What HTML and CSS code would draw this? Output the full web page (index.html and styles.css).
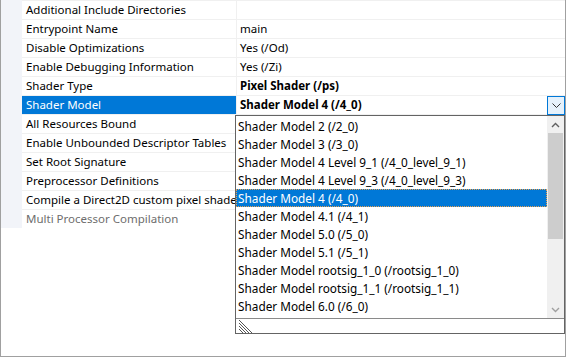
FILE: index.html
```html
<!DOCTYPE html>
<html lang="en">
<head>
  <meta charset="UTF-8" />
  <title>Shader Model</title>
  <link rel="stylesheet" href="styles.css">
</head>
<body>
<div class="frame">
  <div class="grid">
    <div class="row"><div class="name">Additional Include Directories</div><div class="value"></div></div>
    <div class="row"><div class="name">Entrypoint Name</div><div class="value">main</div></div>
    <div class="row"><div class="name">Disable Optimizations</div><div class="value">Yes (/Od)</div></div>
    <div class="row"><div class="name">Enable Debugging Information</div><div class="value">Yes (/Zi)</div></div>
    <div class="row"><div class="name">Shader Type</div><div class="value bold">Pixel Shader (/ps)</div></div>
    <div class="row selected">
      <div class="name">Shader Model</div>
      <div class="value bold">
        <span class="value-text">Shader Model 4 (/4_0)</span>
        <span class="drop-button">
          <svg width="9" height="5" viewBox="0 0 9 5"><path d="M0.5 0.5 L4.5 4.5 L8.5 0.5" fill="none" stroke="#333" stroke-width="1"/></svg>
        </span>
      </div>
    </div>
    <div class="row"><div class="name">All Resources Bound</div><div class="value"></div></div>
    <div class="row"><div class="name">Enable Unbounded Descriptor Tables</div><div class="value"></div></div>
    <div class="row"><div class="name">Set Root Signature</div><div class="value"></div></div>
    <div class="row"><div class="name">Preprocessor Definitions</div><div class="value"></div></div>
    <div class="row"><div class="name long">Compile a Direct2D custom pixel shader</div><div class="value"></div></div>
    <div class="row"><div class="name muted">Multi Processor Compilation</div><div class="value"></div></div>
  </div>

  <div class="dropdown">
    <div class="list-area">
      <ul class="items">
        <li>Shader Model 2 (/2_0)</li>
        <li>Shader Model 3 (/3_0)</li>
        <li>Shader Model 4 Level 9_1 (/4_0_level_9_1)</li>
        <li>Shader Model 4 Level 9_3 (/4_0_level_9_3)</li>
        <li class="current">Shader Model 4 (/4_0)</li>
        <li>Shader Model 4.1 (/4_1)</li>
        <li>Shader Model 5.0 (/5_0)</li>
        <li>Shader Model 5.1 (/5_1)</li>
        <li>Shader Model rootsig_1_0 (/rootsig_1_0)</li>
        <li>Shader Model rootsig_1_1 (/rootsig_1_1)</li>
        <li>Shader Model 6.0 (/6_0)</li>
      </ul>
      <div class="scrollbar">
        <div class="arrow">
          <svg width="9" height="6" viewBox="0 0 9 6"><path d="M1 5 L4.5 1.5 L8 5" fill="none" stroke="#606060" stroke-width="1.4"/></svg>
        </div>
        <div class="track"><div class="thumb"></div></div>
        <div class="arrow">
          <svg width="9" height="6" viewBox="0 0 9 6"><path d="M1 1 L4.5 4.5 L8 1" fill="none" stroke="#a0a0a0" stroke-width="1.4"/></svg>
        </div>
      </div>
    </div>
    <div class="grip-bar">
      <svg width="16" height="14" viewBox="0 0 16 14">
        <path d="M1 1 L14 14 M1 4 L11 14 M1 7 L8 14 M1 10 L5 14" stroke="#555" stroke-width="1" fill="none"/>
      </svg>
    </div>
  </div>
</div>
</body>
</html>
```

FILE: styles.css
```css
body {
  margin: 0;
  background: #fff;
  font-family: "Noto Sans", "Noto Sans CJK KR", sans-serif;
  font-size: 11.5px;
  color: #000;
}
.frame {
  position: relative;
  width: 564px;
  height: 356px;
  border-left: 1px solid #a0a0a0;
  border-right: 1px solid #a0a0a0;
  border-bottom: 1px solid #a0a0a0;
}
.grid {
  background: #f2f4f9;
  padding-left: 21px;
}
.row {
  display: flex;
  height: 18px;
  border-top: 1px solid #f0f0f0;
  background: #fff;
}
.name {
  width: 210px;
  flex-shrink: 0;
  padding-left: 4px;
  border-right: 1px solid #f0f0f0;
  line-height: 18px;
  white-space: nowrap;
}
/* runs on under the open dropdown */
.name.long {
  overflow: visible;
}
.value {
  flex: 1;
  display: flex;
  padding-left: 3px;
  line-height: 18px;
  white-space: nowrap;
}
.bold {
  font-weight: bold;
}
.muted {
  color: #6d6d6d;
}
.selected .name {
  background: #0078d7;
  color: #fff;
}
.value-text {
  flex: 1;
}
.drop-button {
  width: 16px;
  height: 17px;
  border: 1px solid #0078d7;
  background: #e5f1fb;
  display: flex;
  align-items: center;
  justify-content: center;
}
.dropdown {
  position: absolute;
  left: 234px;
  top: 115px;
  width: 328px;
  border: 1px solid #646464;
  background: #fff;
  z-index: 2;
}
.list-area {
  display: flex;
  height: 202px;
  border-bottom: 1px solid #8a8a8a;
}
.items {
  flex: 1;
  list-style: none;
  margin: 0;
  padding: 1px 0 0 0;
  font-size: 11.8px;
}
.items li {
  height: 18px;
  line-height: 18px;
  padding-left: 2px;
  white-space: nowrap;
}
.items li.current {
  background: #0078d7;
  color: #fff;
  outline: 1px dotted #e8a050;
  outline-offset: -1px;
}
.scrollbar {
  width: 17px;
  background: #f0f0f0;
  display: flex;
  flex-direction: column;
}
.arrow {
  height: 17px;
  display: flex;
  align-items: center;
  justify-content: center;
}
.track {
  flex: 1;
}
.thumb {
  height: 106px;
  margin: 0 1px;
  background: #cdcdcd;
}
.grip-bar {
  height: 14px;
}
.grip-bar svg {
  display: block;
  margin-left: 2px;
}
```
